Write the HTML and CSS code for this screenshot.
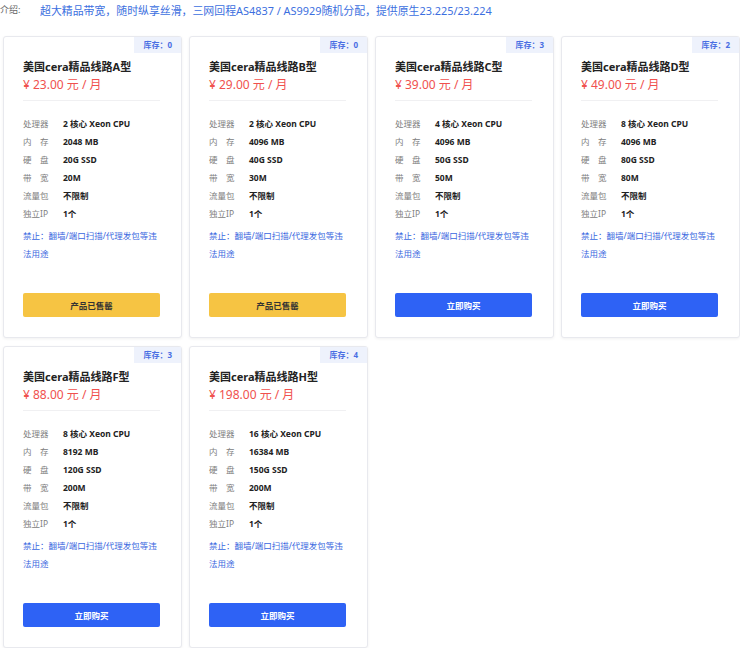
FILE: index.html
```html
<!DOCTYPE html>
<html lang="zh">
<head>
<meta charset="utf-8">
<link rel="stylesheet" href="styles.css">
</head>
<body>
<div class="intro">
  <span class="intro-label">介绍:</span>
  <span class="intro-text">超大精品带宽，随时纵享丝滑，三网回程AS4837 / AS9929随机分配，提供原生23.225/23.224</span>
</div>
<div class="grid">
  <div class="card">
    <div class="stock">库存：0</div>
    <div class="title">美国cera精品线路A型</div>
    <div class="price">¥ 23.00 元 / 月</div>
    <div class="divider"></div>
    <div class="specs">
      <div class="row"><span class="lbl">处理器</span><span class="val">2 核心 Xeon CPU</span></div>
      <div class="row"><span class="lbl">内　存</span><span class="val">2048 MB</span></div>
      <div class="row"><span class="lbl">硬　盘</span><span class="val">20G SSD</span></div>
      <div class="row"><span class="lbl">带　宽</span><span class="val">20M</span></div>
      <div class="row"><span class="lbl">流量包</span><span class="val">不限制</span></div>
      <div class="row"><span class="lbl">独立IP</span><span class="val">1个</span></div>
    </div>
    <div class="ban">禁止：翻墙/端口扫描/代理发包等违法用途</div>
    <div class="btn sold">产品已售罄</div>
  </div>
  <div class="card">
    <div class="stock">库存：0</div>
    <div class="title">美国cera精品线路B型</div>
    <div class="price">¥ 29.00 元 / 月</div>
    <div class="divider"></div>
    <div class="specs">
      <div class="row"><span class="lbl">处理器</span><span class="val">2 核心 Xeon CPU</span></div>
      <div class="row"><span class="lbl">内　存</span><span class="val">4096 MB</span></div>
      <div class="row"><span class="lbl">硬　盘</span><span class="val">40G SSD</span></div>
      <div class="row"><span class="lbl">带　宽</span><span class="val">30M</span></div>
      <div class="row"><span class="lbl">流量包</span><span class="val">不限制</span></div>
      <div class="row"><span class="lbl">独立IP</span><span class="val">1个</span></div>
    </div>
    <div class="ban">禁止：翻墙/端口扫描/代理发包等违法用途</div>
    <div class="btn sold">产品已售罄</div>
  </div>
  <div class="card">
    <div class="stock">库存：3</div>
    <div class="title">美国cera精品线路C型</div>
    <div class="price">¥ 39.00 元 / 月</div>
    <div class="divider"></div>
    <div class="specs">
      <div class="row"><span class="lbl">处理器</span><span class="val">4 核心 Xeon CPU</span></div>
      <div class="row"><span class="lbl">内　存</span><span class="val">4096 MB</span></div>
      <div class="row"><span class="lbl">硬　盘</span><span class="val">50G SSD</span></div>
      <div class="row"><span class="lbl">带　宽</span><span class="val">50M</span></div>
      <div class="row"><span class="lbl">流量包</span><span class="val">不限制</span></div>
      <div class="row"><span class="lbl">独立IP</span><span class="val">1个</span></div>
    </div>
    <div class="ban">禁止：翻墙/端口扫描/代理发包等违法用途</div>
    <div class="btn buy">立即购买</div>
  </div>
  <div class="card">
    <div class="stock">库存：2</div>
    <div class="title">美国cera精品线路D型</div>
    <div class="price">¥ 49.00 元 / 月</div>
    <div class="divider"></div>
    <div class="specs">
      <div class="row"><span class="lbl">处理器</span><span class="val">8 核心 Xeon CPU</span></div>
      <div class="row"><span class="lbl">内　存</span><span class="val">4096 MB</span></div>
      <div class="row"><span class="lbl">硬　盘</span><span class="val">80G SSD</span></div>
      <div class="row"><span class="lbl">带　宽</span><span class="val">80M</span></div>
      <div class="row"><span class="lbl">流量包</span><span class="val">不限制</span></div>
      <div class="row"><span class="lbl">独立IP</span><span class="val">1个</span></div>
    </div>
    <div class="ban">禁止：翻墙/端口扫描/代理发包等违法用途</div>
    <div class="btn buy">立即购买</div>
  </div>
  <div class="card">
    <div class="stock">库存：3</div>
    <div class="title">美国cera精品线路F型</div>
    <div class="price">¥ 88.00 元 / 月</div>
    <div class="divider"></div>
    <div class="specs">
      <div class="row"><span class="lbl">处理器</span><span class="val">8 核心 Xeon CPU</span></div>
      <div class="row"><span class="lbl">内　存</span><span class="val">8192 MB</span></div>
      <div class="row"><span class="lbl">硬　盘</span><span class="val">120G SSD</span></div>
      <div class="row"><span class="lbl">带　宽</span><span class="val">200M</span></div>
      <div class="row"><span class="lbl">流量包</span><span class="val">不限制</span></div>
      <div class="row"><span class="lbl">独立IP</span><span class="val">1个</span></div>
    </div>
    <div class="ban">禁止：翻墙/端口扫描/代理发包等违法用途</div>
    <div class="btn buy">立即购买</div>
  </div>
  <div class="card">
    <div class="stock">库存：4</div>
    <div class="title">美国cera精品线路H型</div>
    <div class="price">¥ 198.00 元 / 月</div>
    <div class="divider"></div>
    <div class="specs">
      <div class="row"><span class="lbl">处理器</span><span class="val">16 核心 Xeon CPU</span></div>
      <div class="row"><span class="lbl">内　存</span><span class="val">16384 MB</span></div>
      <div class="row"><span class="lbl">硬　盘</span><span class="val">150G SSD</span></div>
      <div class="row"><span class="lbl">带　宽</span><span class="val">200M</span></div>
      <div class="row"><span class="lbl">流量包</span><span class="val">不限制</span></div>
      <div class="row"><span class="lbl">独立IP</span><span class="val">1个</span></div>
    </div>
    <div class="ban">禁止：翻墙/端口扫描/代理发包等违法用途</div>
    <div class="btn buy">立即购买</div>
  </div>
</div>
</body>
</html>
```
FILE: styles.css
```css
* { box-sizing: border-box; }
body {
  margin: 0;
  background: #fff;
  font-family: "Noto Sans", "Noto Sans CJK SC", sans-serif;
  color: #222;
}
.intro {
  display: flex;
  align-items: center;
  height: 19px;
}
.intro-label {
  width: 40px;
  font-size: 9px;
  color: #666;
}
.intro-text {
  font-size: 10.9px;
  color: #3c6fe0;
}
.grid {
  display: grid;
  grid-template-columns: repeat(4, 179px);
  column-gap: 7px;
  row-gap: 8px;
  padding-left: 3px;
  margin-top: 17px;
}
.card {
  position: relative;
  height: 302px;
  border: 1px solid #e8e9ee;
  border-radius: 3px;
  box-shadow: 0 1px 3px rgba(0,0,0,0.06);
  background: #fff;
  padding: 21px 20px 0 19px;
  display: flex;
  flex-direction: column;
}
.stock {
  position: absolute;
  top: 0;
  right: 0;
  height: 16px;
  padding: 0 9px;
  background: #eef2fc;
  color: #4a6fe3;
  font-size: 8px;
  font-weight: 700;
  line-height: 16px;
}
.title {
  font-size: 11px;
  font-weight: 700;
  line-height: 18px;
  color: #222;
}
.price {
  font-size: 12px;
  line-height: 18px;
  color: #f0514e;
}
.divider {
  height: 1px;
  background: #f0f0f2;
  margin-top: 6px;
  margin-right: 1px;
}
.specs {
  margin-top: 13px;
}
.row {
  display: flex;
  height: 18px;
  align-items: center;
  font-size: 8.5px;
}
.lbl {
  width: 40px;
  color: #808080;
}
.val {
  font-weight: 700;
  color: #222;
}
.ban {
  margin-top: 5px;
  font-size: 8.5px;
  line-height: 18px;
  color: #3a67e0;
  margin-right: 1px;
}
.btn {
  margin-top: auto;
  margin-bottom: 20px;
  margin-right: 1px;
  height: 24px;
  border-radius: 2px;
  display: flex;
  align-items: center;
  justify-content: center;
  font-size: 8.5px;
  font-weight: 700;
}
.sold {
  background: #f6c443;
  color: #333;
}
.buy {
  background: #2e62f5;
  color: #fff;
}
```
